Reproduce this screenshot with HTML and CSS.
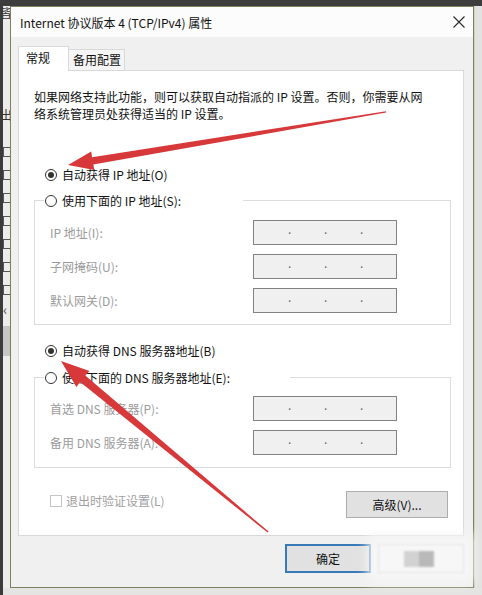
FILE: index.html
```html
<!DOCTYPE html>
<html>
  <head>
    <meta charset="utf-8">
    <link rel="stylesheet" href="styles.css">
  </head>
  <body>
    <div class="screen">
      <div class="top-band"></div>
      <div class="desk">
        <div class="behind">
          <span class="behind-char">皆</span>
          <span class="behind-char second">出</span>
          <span class="behind-box"></span>
          <span class="behind-box"></span>
          <span class="behind-box"></span>
          <span class="behind-box"></span>
          <span class="behind-box"></span>
          <span class="behind-box"></span>
          <span class="behind-box"></span>
          <span class="behind-arrow">&lsaquo;</span>
          <span class="behind-band"></span>
        </div>

        <div class="dialog">
          <div class="titlebar">
            <span class="title">Internet 协议版本 4 (TCP/IPv4) 属性</span>
            <svg class="close" width="12" height="12" viewBox="0 0 12 12">
              <path d="M0.5 0.5 L11.5 11.5 M11.5 0.5 L0.5 11.5" stroke="#2b2b2b" stroke-width="1.1" fill="none"/>
            </svg>
          </div>

          <div class="dialog-body">
            <div class="tabs">
              <div class="tab active">常规</div>
              <div class="tab">备用配置</div>
            </div>

            <div class="panel">
              <p class="desc">如果网络支持此功能，则可以获取自动指派的 IP 设置。否则，你需要从网<br>络系统管理员处获得适当的 IP 设置。</p>

              <div class="radio-row auto-ip">
                <span class="radio checked"></span>
                <span>自动获得 IP 地址(O)</span>
              </div>

              <fieldset class="group ip-group">
                <legend class="legend-ip">
                  <span class="radio"></span>
                  <span>使用下面的 IP 地址(S):</span>
                </legend>
                <div class="fields">
                  <span class="label">IP 地址(I):</span>
                  <div class="ip-box"><i></i><b>.</b><i></i><b>.</b><i></i><b>.</b><i></i></div>
                  <span class="label">子网掩码(U):</span>
                  <div class="ip-box"><i></i><b>.</b><i></i><b>.</b><i></i><b>.</b><i></i></div>
                  <span class="label">默认网关(D):</span>
                  <div class="ip-box"><i></i><b>.</b><i></i><b>.</b><i></i><b>.</b><i></i></div>
                </div>
              </fieldset>

              <div class="radio-row auto-dns">
                <span class="radio checked"></span>
                <span>自动获得 DNS 服务器地址(B)</span>
              </div>

              <fieldset class="group dns-group">
                <legend class="legend-dns">
                  <span class="radio"></span>
                  <span>使用下面的 DNS 服务器地址(E):</span>
                </legend>
                <div class="fields">
                  <span class="label">首选 DNS 服务器(P):</span>
                  <div class="ip-box"><i></i><b>.</b><i></i><b>.</b><i></i><b>.</b><i></i></div>
                  <span class="label">备用 DNS 服务器(A):</span>
                  <div class="ip-box"><i></i><b>.</b><i></i><b>.</b><i></i><b>.</b><i></i></div>
                </div>
              </fieldset>

              <div class="panel-foot">
                <div class="check-row">
                  <span class="checkbox"></span>
                  <span>退出时验证设置(L)</span>
                </div>
                <button class="btn advanced">高级(V)...</button>
              </div>
            </div>

            <div class="footer">
              <button class="btn ok">确定</button>
              <div class="cancel">
                <span class="blk light"></span>
                <span class="blk dark"></span>
              </div>
            </div>
          </div>
        </div>

        <div class="side"></div>
      </div>
      <div class="bottom-band"></div>

      <!-- red annotation arrows drawn over the screenshot -->
      <svg class="arrows" width="482" height="595" viewBox="0 0 482 595">
        <polygon points="68,165 91.2,151.5 92.1,157.2 386,111.2 386.2,112.6 93.3,164.4 94.4,170" fill="#d7393b"/>
        <polygon points="61,361 89.5,371 85.3,375.6 268.6,531.6 267.6,532.6 80.1,381.9 76.4,387" fill="#d7393b"/>
      </svg>
    </div>
  </body>
</html>
```

FILE: styles.css
```css
* {
  box-sizing: border-box;
}
body {
  margin: 0;
  background: #3b3b3b;
  font-family: "Noto Sans CJK SC", "Noto Sans", sans-serif;
  font-size: 12px;
  line-height: 17px;
  color: #1a1a1a;
}
.screen {
  position: relative;
  width: 482px;
  height: 595px;
  overflow: hidden;
}
.top-band {
  height: 6px;
  background: #3d3d3d;
}
.desk {
  display: flex;
  height: 582px;
}
.behind {
  width: 10px;
  border-left: 3px solid #3b3b3b;
  background: #ececea;
  display: flex;
  flex-direction: column;
  align-items: flex-start;
  overflow: hidden;
}
.behind-char {
  font-size: 12px;
  line-height: 14px;
  color: #333;
  margin-left: -3px;
}
.behind-char.second {
  margin-top: 88px;
  margin-bottom: 12px;
}
.behind-box {
  width: 8px;
  height: 10px;
  border: 1px solid #555;
  margin-top: 13px;
}
.behind-arrow {
  margin-top: 6px;
  color: #444;
  font-size: 14px;
}
.behind-band {
  margin-top: 8px;
  width: 7px;
  height: 30px;
  background: #c6c6c4;
}
.side {
  flex: 1;
  background: #e2e2e0;
  border-left: 1px solid #cfd2c2;
}
.bottom-band {
  height: 7px;
  background: #e4e4e2;
  border-left: 3px solid #3b3b3b;
}

/* dialog */
.dialog {
  width: 464px;
  display: flex;
  flex-direction: column;
  border: 1px solid #7c805e;
  background: #f0f0f0;
}
.titlebar {
  height: 30px;
  background: #fcfcfc;
  display: flex;
  align-items: center;
  justify-content: space-between;
  padding: 0 8px 0 9px;
}
.title {
  color: #111;
}
.dialog-body {
  flex: 1;
  padding: 9px 9px 0 7px;
  display: flex;
  flex-direction: column;
}
.tabs {
  display: flex;
  align-items: flex-end;
  margin-bottom: -1px;
}
.tab {
  height: 22px;
  width: 56px;
  padding: 1px 0 0 4px;
  border: 1px solid #d9d9d9;
  border-left: none;
  background: #f5f5f5;
  color: #111;
}
.tab.active {
  position: relative;
  z-index: 1;
  height: 25px;
  width: 51px;
  padding: 2px 0 0 7px;
  border-left: 1px solid #d9d9d9;
  border-bottom: none;
  background: #fff;
}
.panel {
  background: #fff;
  border: 1px solid #d9d9d9;
  padding: 17px 12px 17px 15px;
}
.desc {
  margin: 0;
  color: #111;
}

.radio-row {
  display: flex;
  align-items: center;
  gap: 5px;
  padding-left: 11px;
  color: #111;
}
.auto-ip {
  margin-top: 44px;
}
.auto-dns {
  margin-top: 17px;
}
.radio {
  display: inline-flex;
  align-items: center;
  justify-content: center;
  width: 12px;
  height: 12px;
  border: 1px solid #333;
  border-radius: 50%;
  background: #fff;
  flex: none;
}
.radio.checked::after {
  content: "";
  width: 6px;
  height: 6px;
  border-radius: 50%;
  background: #333;
}

.group {
  margin: 0;
  min-width: 0;
  border: 1px solid #dcdcdc;
}
.ip-group {
  margin-top: 9px;
  padding: 11px 0 11px 15px;
}
.dns-group {
  margin-top: 10px;
  padding: 10px 0 12px 15px;
}
.group legend {
  display: flex;
  align-items: center;
  gap: 5px;
  margin-left: -6px;
  padding: 0 0 0 1px;
  color: #111;
}
.legend-ip {
  width: 199px;
}
.legend-dns {
  width: 246px;
}
.fields {
  display: grid;
  grid-template-columns: 203px 144px;
  row-gap: 9px;
  align-items: center;
}
.label {
  color: #9b9b9b;
}
.ip-box {
  height: 25px;
  border: 1px solid #828282;
  background: #f0f0f0;
  display: flex;
  align-items: center;
  padding-left: 1px;
}
.ip-box i {
  width: 33px;
}
.ip-box b {
  width: 3px;
  font-weight: normal;
  font-size: 12px;
  line-height: 12px;
  color: #6e6e6e;
  text-align: center;
  margin-top: -8px;
}

.panel-foot {
  margin-top: 23px;
  display: flex;
  justify-content: space-between;
  align-items: flex-start;
}
.check-row {
  display: flex;
  align-items: center;
  gap: 4px;
  margin-left: 16px;
  padding-top: 1px;
  color: #a0a0a0;
}
.checkbox {
  width: 12px;
  height: 12px;
  border: 1px solid #c4c4c4;
  background: #fff;
}
.btn {
  font-family: inherit;
  font-size: 12px;
  color: #111;
  background: #e1e1e1;
  border: 1px solid #adadad;
  padding: 0;
}
.advanced {
  width: 102px;
  height: 27px;
  margin-right: 3px;
}

.footer {
  display: flex;
  justify-content: flex-end;
  gap: 7px;
  padding: 8px 0 13px;
}
.ok {
  width: 86px;
  height: 29px;
  border: 2px solid #3a79b8;
}
.cancel {
  width: 86px;
  height: 29px;
  background: #f7f7f7;
  border: 1px solid #e2e2e2;
  box-shadow: 0 0 10px 10px #f6f6f6;
  display: flex;
  align-items: center;
  padding-left: 25px;
  filter: blur(1px);
}
.blk {
  height: 16px;
  width: 15px;
}
.blk.light {
  background: #d2d2d2;
}
.blk.dark {
  background: #b9b9b9;
}

.arrows {
  position: absolute;
  left: 0;
  top: 0;
  pointer-events: none;
}
```
